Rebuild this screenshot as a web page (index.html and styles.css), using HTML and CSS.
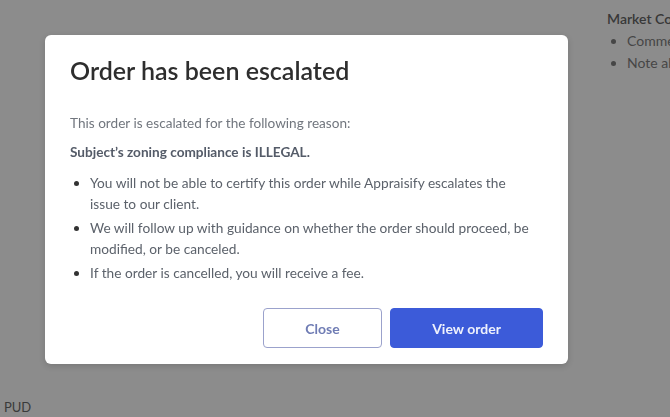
FILE: index.html
```html
<!DOCTYPE html>
<html lang="en">
<head>
<meta charset="utf-8">
<title>Order has been escalated</title>
<link rel="stylesheet" href="styles.css">
</head>
<body>
<div class="page">
  <main class="main">
    <div class="main-bottom">PUD</div>
  </main>
  <aside class="aside">
    <h4 class="aside-title">Market Conditions</h4>
    <ul class="aside-list">
      <li>Comments</li>
      <li>Note about</li>
    </ul>
  </aside>
</div>

<div class="overlay">
  <div class="modal" role="dialog" aria-labelledby="m-title">
    <h2 class="modal-title" id="m-title">Order has been escalated</h2>
    <p class="modal-lead">This order is escalated for the following reason:</p>
    <p class="modal-reason">Subject’s zoning compliance is ILLEGAL.</p>
    <ul class="modal-list">
      <li>You will not be able to certify this order while Appraisify escalates the issue to our client.</li>
      <li>We will follow up with guidance on whether the order should proceed, be modified, or be canceled.</li>
      <li>If the order is cancelled, you will receive a fee.</li>
    </ul>
    <div class="modal-actions">
      <button class="btn btn-outline">Close</button>
      <button class="btn btn-primary">View order</button>
    </div>
  </div>
</div>
</body>
</html>
```

FILE: styles.css
```css
* { box-sizing: border-box; }
html, body { margin: 0; padding: 0; }
body {
  font-family: Lato, "Noto Sans", sans-serif;
  background: #8c8c8c;
  width: 670px;
  height: 417px;
  overflow: hidden;
}
.page {
  display: flex;
  height: 417px;
}
.main {
  flex: 1;
  display: flex;
  flex-direction: column;
  justify-content: flex-end;
  padding: 0 0 2px 4px;
}
.main-bottom {
  font-size: 13px;
  color: #3a3a3a;
  line-height: 16px;
}
.aside {
  width: 63px;
  padding-top: 10px;
  white-space: nowrap;
  overflow: hidden;
}
.aside-title {
  margin: 0;
  font-size: 14px;
  font-weight: 600;
  color: #383838;
  line-height: 18px;
}
.aside-list {
  margin: 2px 0 0;
  padding-left: 20px;
  font-size: 14px;
  color: #464646;
  line-height: 22px;
}
.overlay {
  position: fixed;
  inset: 0;
}
.modal {
  position: absolute;
  left: 45px;
  top: 35px;
  width: 523px;
  height: 329px;
  background: #fff;
  border-radius: 6px;
  padding: 20px 25px 16px;
  display: flex;
  flex-direction: column;
  box-shadow: 0 2px 6px rgba(0,0,0,0.15);
}
.modal-title {
  margin: 0;
  font-size: 25px;
  line-height: 30px;
  font-weight: 600;
  color: #2e2e2e;
}
.modal-lead {
  margin: 28px 0 0;
  font-size: 13.6px;
  line-height: 21px;
  color: #71767e;
}
.modal-reason {
  margin: 8px 0 0;
  font-size: 13.6px;
  line-height: 21px;
  font-weight: 700;
  color: #545b68;
}
.modal-list {
  margin: 9px 0 0;
  padding: 0 14px 0 20px;
  font-size: 13.7px;
  line-height: 21px;
  color: #5c626b;
}
.modal-list li + li { margin-top: 3px; }
.modal-list li::marker { color: #333; }
.modal-actions {
  margin-top: auto;
  display: flex;
  justify-content: flex-end;
  gap: 8px;
}
.btn {
  height: 40px;
  border-radius: 4px;
  font-family: Lato, "Noto Sans", sans-serif;
  font-size: 14px;
  font-weight: 700;
  cursor: pointer;
}
.btn-outline {
  width: 119px;
  background: #fff;
  border: 1px solid #9ba2cc;
  color: #6f7cb4;
}
.btn-primary {
  width: 153px;
  background: #3c5bd9;
  border: 1px solid #3c5bd9;
  color: #eef1fc;
}
```
